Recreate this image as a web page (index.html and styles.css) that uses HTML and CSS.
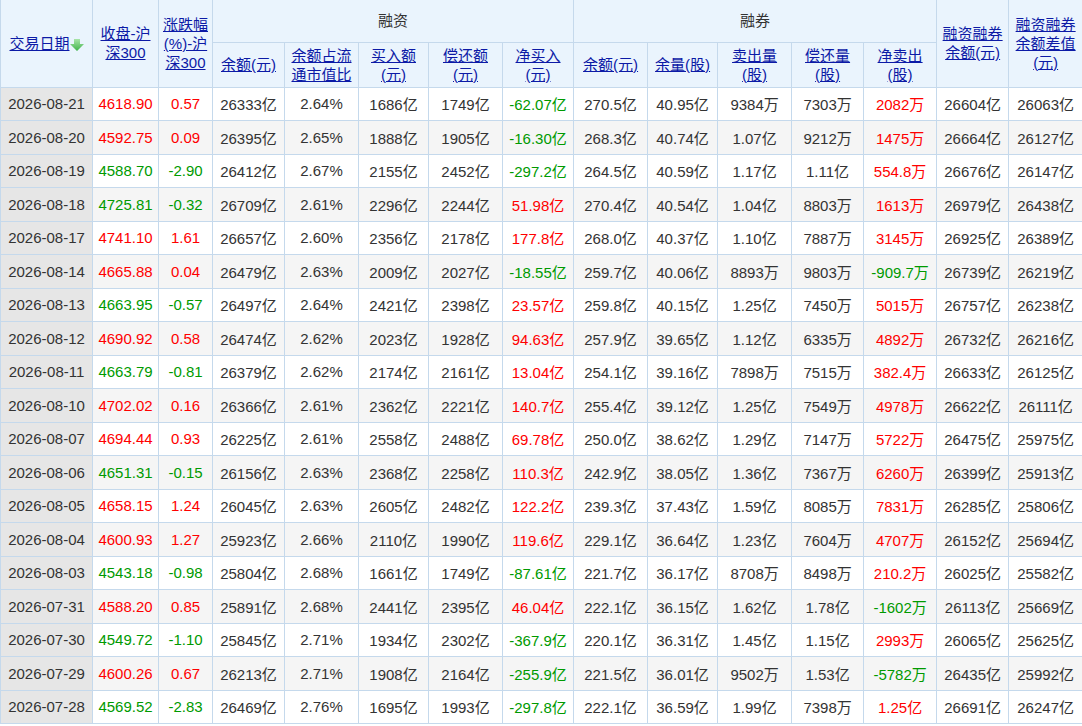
FILE: index.html
```html
<!DOCTYPE html>
<html lang="zh-CN">
<head>
<meta charset="utf-8">
<title>融资融券 - 沪深300</title>
<link rel="stylesheet" href="styles.css">
</head>
<body>
<div class="page">
<table class="grid">
<colgroup>
<col class="w92"><col class="w66"><col class="w54"><col class="w72"><col class="w74">
<col class="w70"><col class="w74"><col class="w71"><col class="w74"><col class="w70">
<col class="w74"><col class="w72"><col class="w73"><col class="w72"><col class="w74">
</colgroup>
<thead>
<tr class="hr1">
<th rowspan="2"><a href="#">交易日期</a><svg class="sort" width="14" height="12" viewBox="0 0 14 12"><defs><linearGradient id="ag" x1="0" y1="0" x2="0" y2="1"><stop offset="0" stop-color="#a8e4a8"/><stop offset="1" stop-color="#3fb34a"/></linearGradient></defs><path d="M4 0h6v5h4l-7 7-7-7h4z" fill="url(#ag)"/></svg></th>
<th rowspan="2"><a href="#">收盘-沪深300</a></th>
<th rowspan="2"><a href="#">涨跌幅(%)-沪深300</a></th>
<th colspan="5" class="grp">融资</th>
<th colspan="5" class="grp">融券</th>
<th rowspan="2"><a href="#">融资融券余额(元)</a></th>
<th rowspan="2"><a href="#">融资融券余额差值(元)</a></th>
</tr>
<tr class="hr2">
<th><a href="#">余额(元)</a></th>
<th><a href="#">余额占流通市值比</a></th>
<th><a href="#">买入额(元)</a></th>
<th><a href="#">偿还额(元)</a></th>
<th><a href="#">净买入(元)</a></th>
<th><a href="#">余额(元)</a></th>
<th><a href="#">余量(股)</a></th>
<th><a href="#">卖出量(股)</a></th>
<th><a href="#">偿还量(股)</a></th>
<th><a href="#">净卖出(股)</a></th>
</tr>
</thead>
<tbody>
<tr><td class="d">2026-08-21</td><td class="r">4618.90</td><td class="r">0.57</td><td>26333亿</td><td>2.64%</td><td>1686亿</td><td>1749亿</td><td class="g">-62.07亿</td><td>270.5亿</td><td>40.95亿</td><td>9384万</td><td>7303万</td><td class="r">2082万</td><td>26604亿</td><td>26063亿</td></tr>
<tr><td class="d">2026-08-20</td><td class="r">4592.75</td><td class="r">0.09</td><td>26395亿</td><td>2.65%</td><td>1888亿</td><td>1905亿</td><td class="g">-16.30亿</td><td>268.3亿</td><td>40.74亿</td><td>1.07亿</td><td>9212万</td><td class="r">1475万</td><td>26664亿</td><td>26127亿</td></tr>
<tr><td class="d">2026-08-19</td><td class="g">4588.70</td><td class="g">-2.90</td><td>26412亿</td><td>2.67%</td><td>2155亿</td><td>2452亿</td><td class="g">-297.2亿</td><td>264.5亿</td><td>40.59亿</td><td>1.17亿</td><td>1.11亿</td><td class="r">554.8万</td><td>26676亿</td><td>26147亿</td></tr>
<tr><td class="d">2026-08-18</td><td class="g">4725.81</td><td class="g">-0.32</td><td>26709亿</td><td>2.61%</td><td>2296亿</td><td>2244亿</td><td class="r">51.98亿</td><td>270.4亿</td><td>40.54亿</td><td>1.04亿</td><td>8803万</td><td class="r">1613万</td><td>26979亿</td><td>26438亿</td></tr>
<tr><td class="d">2026-08-17</td><td class="r">4741.10</td><td class="r">1.61</td><td>26657亿</td><td>2.60%</td><td>2356亿</td><td>2178亿</td><td class="r">177.8亿</td><td>268.0亿</td><td>40.37亿</td><td>1.10亿</td><td>7887万</td><td class="r">3145万</td><td>26925亿</td><td>26389亿</td></tr>
<tr><td class="d">2026-08-14</td><td class="r">4665.88</td><td class="r">0.04</td><td>26479亿</td><td>2.63%</td><td>2009亿</td><td>2027亿</td><td class="g">-18.55亿</td><td>259.7亿</td><td>40.06亿</td><td>8893万</td><td>9803万</td><td class="g">-909.7万</td><td>26739亿</td><td>26219亿</td></tr>
<tr><td class="d">2026-08-13</td><td class="g">4663.95</td><td class="g">-0.57</td><td>26497亿</td><td>2.64%</td><td>2421亿</td><td>2398亿</td><td class="r">23.57亿</td><td>259.8亿</td><td>40.15亿</td><td>1.25亿</td><td>7450万</td><td class="r">5015万</td><td>26757亿</td><td>26238亿</td></tr>
<tr><td class="d">2026-08-12</td><td class="r">4690.92</td><td class="r">0.58</td><td>26474亿</td><td>2.62%</td><td>2023亿</td><td>1928亿</td><td class="r">94.63亿</td><td>257.9亿</td><td>39.65亿</td><td>1.12亿</td><td>6335万</td><td class="r">4892万</td><td>26732亿</td><td>26216亿</td></tr>
<tr><td class="d">2026-08-11</td><td class="g">4663.79</td><td class="g">-0.81</td><td>26379亿</td><td>2.62%</td><td>2174亿</td><td>2161亿</td><td class="r">13.04亿</td><td>254.1亿</td><td>39.16亿</td><td>7898万</td><td>7515万</td><td class="r">382.4万</td><td>26633亿</td><td>26125亿</td></tr>
<tr><td class="d">2026-08-10</td><td class="r">4702.02</td><td class="r">0.16</td><td>26366亿</td><td>2.61%</td><td>2362亿</td><td>2221亿</td><td class="r">140.7亿</td><td>255.4亿</td><td>39.12亿</td><td>1.25亿</td><td>7549万</td><td class="r">4978万</td><td>26622亿</td><td>26111亿</td></tr>
<tr><td class="d">2026-08-07</td><td class="r">4694.44</td><td class="r">0.93</td><td>26225亿</td><td>2.61%</td><td>2558亿</td><td>2488亿</td><td class="r">69.78亿</td><td>250.0亿</td><td>38.62亿</td><td>1.29亿</td><td>7147万</td><td class="r">5722万</td><td>26475亿</td><td>25975亿</td></tr>
<tr><td class="d">2026-08-06</td><td class="g">4651.31</td><td class="g">-0.15</td><td>26156亿</td><td>2.63%</td><td>2368亿</td><td>2258亿</td><td class="r">110.3亿</td><td>242.9亿</td><td>38.05亿</td><td>1.36亿</td><td>7367万</td><td class="r">6260万</td><td>26399亿</td><td>25913亿</td></tr>
<tr><td class="d">2026-08-05</td><td class="r">4658.15</td><td class="r">1.24</td><td>26045亿</td><td>2.63%</td><td>2605亿</td><td>2482亿</td><td class="r">122.2亿</td><td>239.3亿</td><td>37.43亿</td><td>1.59亿</td><td>8085万</td><td class="r">7831万</td><td>26285亿</td><td>25806亿</td></tr>
<tr><td class="d">2026-08-04</td><td class="r">4600.93</td><td class="r">1.27</td><td>25923亿</td><td>2.66%</td><td>2110亿</td><td>1990亿</td><td class="r">119.6亿</td><td>229.1亿</td><td>36.64亿</td><td>1.23亿</td><td>7604万</td><td class="r">4707万</td><td>26152亿</td><td>25694亿</td></tr>
<tr><td class="d">2026-08-03</td><td class="g">4543.18</td><td class="g">-0.98</td><td>25804亿</td><td>2.68%</td><td>1661亿</td><td>1749亿</td><td class="g">-87.61亿</td><td>221.7亿</td><td>36.17亿</td><td>8708万</td><td>8498万</td><td class="r">210.2万</td><td>26025亿</td><td>25582亿</td></tr>
<tr><td class="d">2026-07-31</td><td class="r">4588.20</td><td class="r">0.85</td><td>25891亿</td><td>2.68%</td><td>2441亿</td><td>2395亿</td><td class="r">46.04亿</td><td>222.1亿</td><td>36.15亿</td><td>1.62亿</td><td>1.78亿</td><td class="g">-1602万</td><td>26113亿</td><td>25669亿</td></tr>
<tr><td class="d">2026-07-30</td><td class="g">4549.72</td><td class="g">-1.10</td><td>25845亿</td><td>2.71%</td><td>1934亿</td><td>2302亿</td><td class="g">-367.9亿</td><td>220.1亿</td><td>36.31亿</td><td>1.45亿</td><td>1.15亿</td><td class="r">2993万</td><td>26065亿</td><td>25625亿</td></tr>
<tr><td class="d">2026-07-29</td><td class="r">4600.26</td><td class="r">0.67</td><td>26213亿</td><td>2.71%</td><td>1908亿</td><td>2164亿</td><td class="g">-255.9亿</td><td>221.5亿</td><td>36.01亿</td><td>9502万</td><td>1.53亿</td><td class="g">-5782万</td><td>26435亿</td><td>25992亿</td></tr>
<tr><td class="d">2026-07-28</td><td class="g">4569.52</td><td class="g">-2.83</td><td>26469亿</td><td>2.76%</td><td>1695亿</td><td>1993亿</td><td class="g">-297.8亿</td><td>222.1亿</td><td>36.59亿</td><td>1.99亿</td><td>7398万</td><td class="r">1.25亿</td><td>26691亿</td><td>26247亿</td></tr>
</tbody>
</table>
</div>
</body>
</html>
```
FILE: styles.css
```css
html, body {
  margin: 0;
  padding: 0;
  background: #ffffff;
  overflow: hidden;
}
body {
  font-family: "Liberation Sans", Arial, "Noto Sans CJK SC", sans-serif;
  font-size: 15px;
  color: #333333;
}
.page {
  width: 1082px;
}
.grid {
  border-collapse: collapse;
  table-layout: fixed;
  width: 1082px;
}
.w92 { width: 92px; }
.w66 { width: 66px; }
.w54 { width: 54px; }
.w70 { width: 70px; }
.w71 { width: 71px; }
.w72 { width: 72px; }
.w73 { width: 73px; }
.w74 { width: 74px; }

.grid th,
.grid td {
  border: 1px solid #c5d9ec;
  padding: 0 3px;
  text-align: center;
  vertical-align: middle;
}
.grid th {
  background: #eaf4fd;
  font-weight: normal;
  line-height: 19px;
  color: #333333;
}
.grid .hr1 {
  height: 42px;
}
.grid .hr1 th {
  border-top: 0;
}
.grid .hr2 {
  height: 45px;
}
.grid th a {
  color: #0c1aa6;
  text-decoration: underline;
}
.sort {
  vertical-align: -2px;
}
.grid tbody tr {
  height: 33.5px;
}
.grid tbody td {
  white-space: nowrap;
  padding: 0;
}
.grid tbody tr:nth-child(even) td {
  background: #f5f5f5;
}
.grid tbody td.d,
.grid tbody tr:nth-child(even) td.d {
  background: #e6e6e6;
}
.grid .r { color: #ff0000; }
.grid .g { color: #009a00; }
```
